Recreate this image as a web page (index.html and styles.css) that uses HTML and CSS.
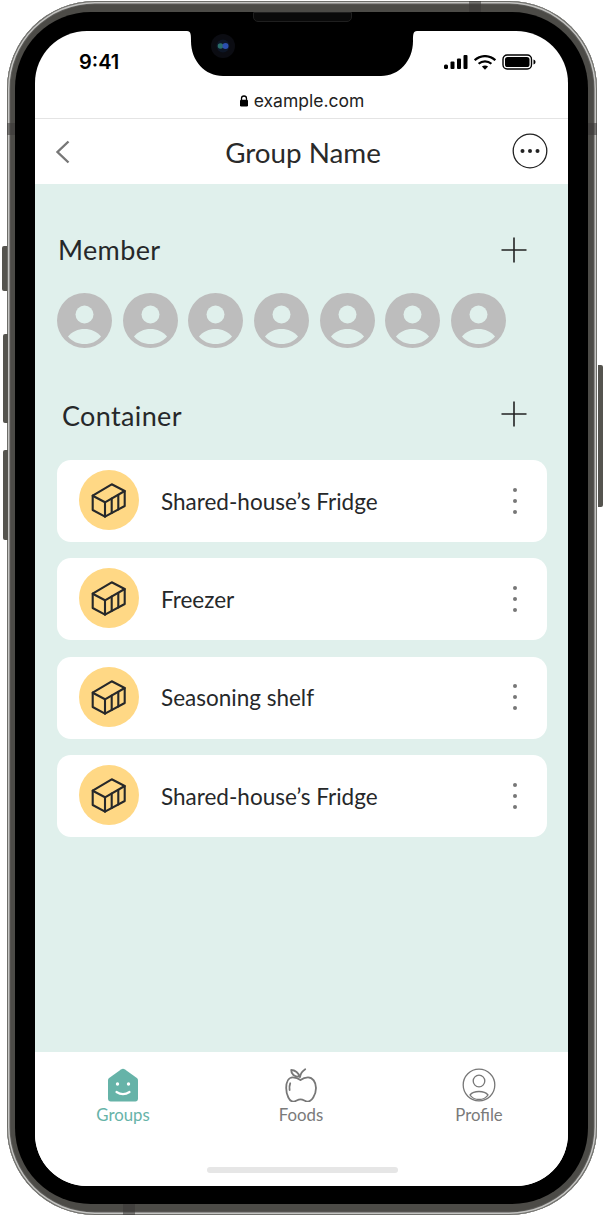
FILE: index.html
```html
<!DOCTYPE html>
<html lang="en">
<head>
<meta charset="utf-8">
<title>Group Name</title>
<link rel="stylesheet" href="styles.css">
</head>
<body>
<div class="phone">
  <span class="side side-l1"></span>
  <span class="side side-l2"></span>
  <span class="side side-l3"></span>
  <span class="side side-r1"></span>
  <span class="band band-top"></span>
  <span class="band band-bottom"></span>
  <span class="band band-left"></span>
  <span class="band band-right"></span>
  <div class="bezel">
    <span class="speaker"></span>
    <div class="screen">
      <svg class="notch" width="230" height="46" viewBox="0 0 230 46">
        <path d="M0 0H230C226 0 226 4 226 10C226 30 212 45 194 45H36C18 45 4 30 4 10C4 4 4 0 0 0Z" fill="#000"/>
        <circle cx="36" cy="15" r="12" fill="#0b0c12"/>
        <circle cx="36" cy="15" r="6.500" fill="#0d1626"/>
        <circle cx="33.500" cy="15" r="2.800" fill="#2a6e6a"/>
        <circle cx="38.500" cy="15" r="3" fill="#2b4fae"/>
      </svg>
      <div class="status">
        <span class="time">9:41</span>
        <div class="status-icons">
          <svg width="24" height="14" viewBox="0 0 24 14"><g fill="#000"><rect x="0" y="9.500" width="4" height="4.500" rx="1.500"/><rect x="6.500" y="6.500" width="4" height="7.500" rx="1"/><rect x="13" y="3.500" width="4" height="10.500" rx="1"/><rect x="19.500" y="0" width="4" height="14" rx="1"/></g></svg>
          <svg width="22" height="15" viewBox="0 0 22 15"><g fill="none" stroke="#000" stroke-width="2.200"><path d="M0.700 5.200C6.500-.3 15.500-.3 21.300 5.200"/><path d="M4.600 8.800C8.300 5.500 13.700 5.500 17.400 8.800"/></g><path d="M7.900 11.600C9.700 10.200 12.300 10.200 14.100 11.600L11 14.800Z" fill="#000"/></svg>
          <svg width="34" height="16" viewBox="0 0 34 16"><rect x="1" y="1" width="28.500" height="14" rx="4.200" fill="none" stroke="#000" stroke-width="1.400"/><rect x="3" y="3" width="24.500" height="10" rx="2.600" fill="#000"/><path d="M31.500 5.500C33 6 33.500 7 33.500 8S33 10 31.500 10.500Z" fill="#000"/></svg>
        </div>
      </div>
      <div class="urlbar">
        <svg width="10" height="12" viewBox="0 0 10 12"><path d="M2.500 5V3.500a2.500 2.500 0 0 1 5 0V5" fill="none" stroke="#000" stroke-width="1.300"/><rect x="1" y="4.800" width="8" height="6.700" rx="1.300" fill="#000"/></svg>
        <span>example.com</span>
      </div>
      <header class="appbar">
        <svg class="back" width="16" height="24" viewBox="0 0 16 24"><path d="M13.500 1.500 2.500 12l11 10.500" fill="none" stroke="#777" stroke-width="2.400"/></svg>
        <h1 class="page-title">Group Name</h1>
        <svg class="more" width="36" height="36" viewBox="0 0 36 36"><circle cx="18" cy="18" r="16.800" fill="none" stroke="#222" stroke-width="1.300"/><g fill="#222"><circle cx="10.500" cy="18" r="2"/><circle cx="18" cy="18" r="2"/><circle cx="25.500" cy="18" r="2"/></g></svg>
      </header>
      <main class="content">
        <section class="section-head member-head">
          <h2 class="section-title">Member</h2>
          <svg class="plus" width="26" height="26" viewBox="0 0 26 26"><path d="M13 0.500V25.500M0.500 13H25.500" stroke="#222" stroke-width="1.600"/></svg>
        </section>
        <div class="avatars">
          <svg class="avatar" viewBox="0 0 55 55"><use href="#person"/></svg>
          <svg class="avatar" viewBox="0 0 55 55"><use href="#person"/></svg>
          <svg class="avatar" viewBox="0 0 55 55"><use href="#person"/></svg>
          <svg class="avatar" viewBox="0 0 55 55"><use href="#person"/></svg>
          <svg class="avatar" viewBox="0 0 55 55"><use href="#person"/></svg>
          <svg class="avatar" viewBox="0 0 55 55"><use href="#person"/></svg>
          <svg class="avatar" viewBox="0 0 55 55"><use href="#person"/></svg>
        </div>
        <section class="section-head container-head">
          <h2 class="section-title">Container</h2>
          <svg class="plus plus-raised" width="26" height="26" viewBox="0 0 26 26"><path d="M13 0.500V25.500M0.500 13H25.500" stroke="#222" stroke-width="1.600"/></svg>
        </section>
        <ul class="cards">
          <li class="card">
            <span class="badge"><svg width="36" height="36" viewBox="0 0 36 36"><use href="#box"/></svg></span>
            <span class="card-name">Shared-house’s Fridge</span>
            <span class="kebab"><i></i><i></i><i></i></span>
          </li>
          <li class="card">
            <span class="badge"><svg width="36" height="36" viewBox="0 0 36 36"><use href="#box"/></svg></span>
            <span class="card-name">Freezer</span>
            <span class="kebab"><i></i><i></i><i></i></span>
          </li>
          <li class="card">
            <span class="badge"><svg width="36" height="36" viewBox="0 0 36 36"><use href="#box"/></svg></span>
            <span class="card-name">Seasoning shelf</span>
            <span class="kebab"><i></i><i></i><i></i></span>
          </li>
          <li class="card">
            <span class="badge"><svg width="36" height="36" viewBox="0 0 36 36"><use href="#box"/></svg></span>
            <span class="card-name">Shared-house’s Fridge</span>
            <span class="kebab"><i></i><i></i><i></i></span>
          </li>
        </ul>
      </main>
      <nav class="tabbar">
        <div class="tab tab-active">
          <svg width="34" height="34" viewBox="0 0 34 34"><path d="M15 1.500 3.500 9.800C2.400 10.600 2 11.300 2 12.700V30.500C2 32.200 3 33.500 4.700 33.500H29.300C31 33.500 32 32.200 32 30.500V12.700C32 11.300 31.600 10.600 30.500 9.800L19 1.500C17.600.5 16.400.5 15 1.500Z" fill="#66b3a8"/><circle cx="11.500" cy="16" r="1.700" fill="#fff"/><circle cx="22.500" cy="16" r="1.700" fill="#fff"/><path d="M10.500 24c4 2.500 9 2.500 13 0" fill="none" stroke="#fff" stroke-width="2.200" stroke-linecap="round"/></svg>
          <span>Groups</span>
        </div>
        <div class="tab">
          <svg width="34" height="34" viewBox="0 0 34 34"><g fill="none" stroke="#777" stroke-width="1.800" stroke-linecap="round" stroke-linejoin="round"><path d="M16.500 12C14 10 11.500 9.300 8.800 9.300 4.500 9.300 2.200 14 2.200 20 2.200 27 5.500 33.700 9.500 33.700 12 33.700 13.500 31.300 16.500 31.300 19.500 31.300 21 33.700 23.500 33.700 27.500 33.700 32 27 32 20 32 14 28.500 9.300 24 9.300 21.500 9.300 19 10 16.500 12Z"/><path d="M15.500 8.700C15 5 11 2 7.200 2 7 6 10.500 9 15.500 8.700Z"/><path d="M16 9C16.500 6 18.500 3 21.200 1.300"/><path d="M6.200 15.300C5.500 17 5.300 19.500 5.600 22"/></g></svg>
          <span>Foods</span>
        </div>
        <div class="tab">
          <svg width="34" height="34" viewBox="0 0 34 34"><g fill="none" stroke="#777" stroke-width="1.300"><circle cx="17" cy="17" r="15.800"/><circle cx="17" cy="13" r="5.800"/><path d="M8 27c2-2.500 5-3.500 9-3.500s7 1 9 3.500c-2 3-5 4.500-9 4.500s-7-1.500-9-4.500Z"/></g></svg>
          <span>Profile</span>
        </div>
        <span class="home-bar"></span>
      </nav>
    </div>
  </div>
</div>
<svg class="defs" width="0" height="0">
  <defs>
    <g id="person">
      <circle cx="27.500" cy="27.500" r="27.500" fill="#bdbdbd"/>
      <circle cx="27.500" cy="21.500" r="9" fill="#e0f0ec"/>
      <path d="M11 43.500C15 38.500 21 36 27.500 36S40 38.500 44 43.500C40 48.500 34 51 27.500 51S15 48.500 11 43.500Z" fill="#e0f0ec"/>
    </g>
    <g id="box" fill="none" stroke="#26282a" stroke-width="2.100" stroke-linejoin="round" stroke-linecap="round">
      <path d="M20.700 2.300 1.700 13.700V28L14 34.700 33.700 24V9Z"/>
      <path d="M1.700 13.700 14 20.300 33.700 9M14 20.300V34.700"/>
      <path d="M20.700 16.600V31M27.300 13V27.500"/>
    </g>
  </defs>
</svg>
</body>
</html>
```

FILE: styles.css
```css
* { box-sizing: border-box; }
html, body { margin: 0; padding: 0; background: #fff; }
body { width: 605px; height: 1215px; overflow: hidden; font-family: "Lato", "Noto Sans", sans-serif; color: #26282a; }
h1, h2, ul { margin: 0; padding: 0; font-weight: 400; }
ul { list-style: none; }
svg { display: block; }
.defs { position: absolute; }

.phone {
  position: relative;
  width: 590px;
  height: 1214px;
  margin: 1px 0 0 7px;
  padding: 11px 9px 11px 8px;
  border-radius: 88px;
  background: #4c4b47;
  box-shadow: inset 0 0 0 1px #6e6e6a, inset 0 0 0 2.500px #c4c4c2, inset 0 0 0 3.500px #5e5d5a;
}
.side { position: absolute; width: 5px; background: #55544f; }
.side-l1 { left: -5px; top: 245px; height: 45px; border-radius: 2px 0 0 2px; }
.side-l2 { left: -4px; top: 333px; height: 89px; border-radius: 2px 0 0 2px; }
.side-l3 { left: -4px; top: 449px; height: 90px; border-radius: 2px 0 0 2px; }
.side-r1 { right: -6px; top: 364px; height: 142px; border-radius: 0 2px 2px 0; }
.band { position: absolute; background: #3a3936; opacity: .55; }
.band-top { left: 462px; top: 0; width: 12px; height: 11px; }
.band-bottom { left: 116px; bottom: 0; width: 12px; height: 11px; }
.band-left { left: 0; top: 122px; width: 8px; height: 12px; }
.band-right { right: 0; top: 122px; width: 9px; height: 12px; }

.bezel {
  position: relative;
  height: 100%;
  padding: 19px 20px 18px;
  border-radius: 76px;
  background: #000;
}
.speaker {
  position: absolute;
  left: 238px;
  top: 0;
  width: 99px;
  height: 10px;
  border: 1px solid #1f1f1f;
  border-radius: 0 0 5px 5px;
  background: #0a0a0a;
}
.screen {
  position: relative;
  display: flex;
  flex-direction: column;
  height: 100%;
  border-radius: 52px;
  overflow: hidden;
  background: #fff;
}
.notch { position: absolute; left: 152px; top: 0; }

.status { display: flex; align-items: center; justify-content: space-between; height: 62px; padding: 0 32px 0 44px; }
.time { font: 600 20px "Inter", sans-serif; color: #000; }
.status-icons { display: flex; align-items: center; gap: 6px; }
.urlbar { display: flex; align-items: center; justify-content: center; gap: 5px; height: 26px; font: 400 17.500px "Inter", sans-serif; color: #222; border-bottom: 1px solid #e4e4e4; padding-bottom: 10px; }
.appbar { position: relative; display: flex; align-items: center; justify-content: center; height: 65px; flex: none; }
.back { position: absolute; left: 20px; top: 21px; }
.more { position: absolute; right: 20px; top: 13.500px; }
.page-title { font-size: 27.800px; line-height: 1; color: #2a2a2a; padding: 3px 0 0 3px; }

.content { flex: 1; padding: 0 21px 0 22px; background: #e0f0ec; }
.section-head { display: flex; align-items: center; justify-content: space-between; padding-right: 20px; }
.member-head { padding-top: 53px; padding-left: 1px; height: 79px; }
.container-head { height: 26px; margin-top: 55px; padding-left: 5px; }
.section-title { font-size: 27px; line-height: 26px; letter-spacing: .35px; color: #26282a; }
.plus-raised { margin-top: -4px; }
.avatars { display: flex; gap: 10.700px; margin-top: 30px; }
.avatar { width: 55px; height: 55px; flex: none; }
.cards { display: flex; flex-direction: column; gap: 16.400px; margin-top: 31px; }
.card { display: flex; align-items: center; height: 82px; padding: 0 30px 0 22px; border-radius: 14px; background: #fff; }
.badge { display: flex; align-items: center; justify-content: center; width: 60px; height: 60px; flex: none; margin: -2px 22px 0 0; border-radius: 50%; background: #ffd885; }
.card-name { flex: 1; font-size: 22.500px; color: #26282a; }
.kebab { display: flex; flex-direction: column; gap: 7px; margin-top: -1px; }
.kebab i { display: block; width: 4px; height: 4px; border-radius: 50%; background: #777; }

.tabbar { position: relative; display: flex; justify-content: space-between; height: 134px; flex: none; padding: 16px 47px 0 46px; background: #fff; }
.tab { display: flex; flex-direction: column; align-items: center; gap: 2px; width: 84px; font-size: 16.800px; color: #7a7a7a; }
.tab-active { color: #66b3a8; }
.home-bar { position: absolute; left: 172px; bottom: 13px; width: 191px; height: 6px; border-radius: 3px; background: #e6e6e6; }
```
